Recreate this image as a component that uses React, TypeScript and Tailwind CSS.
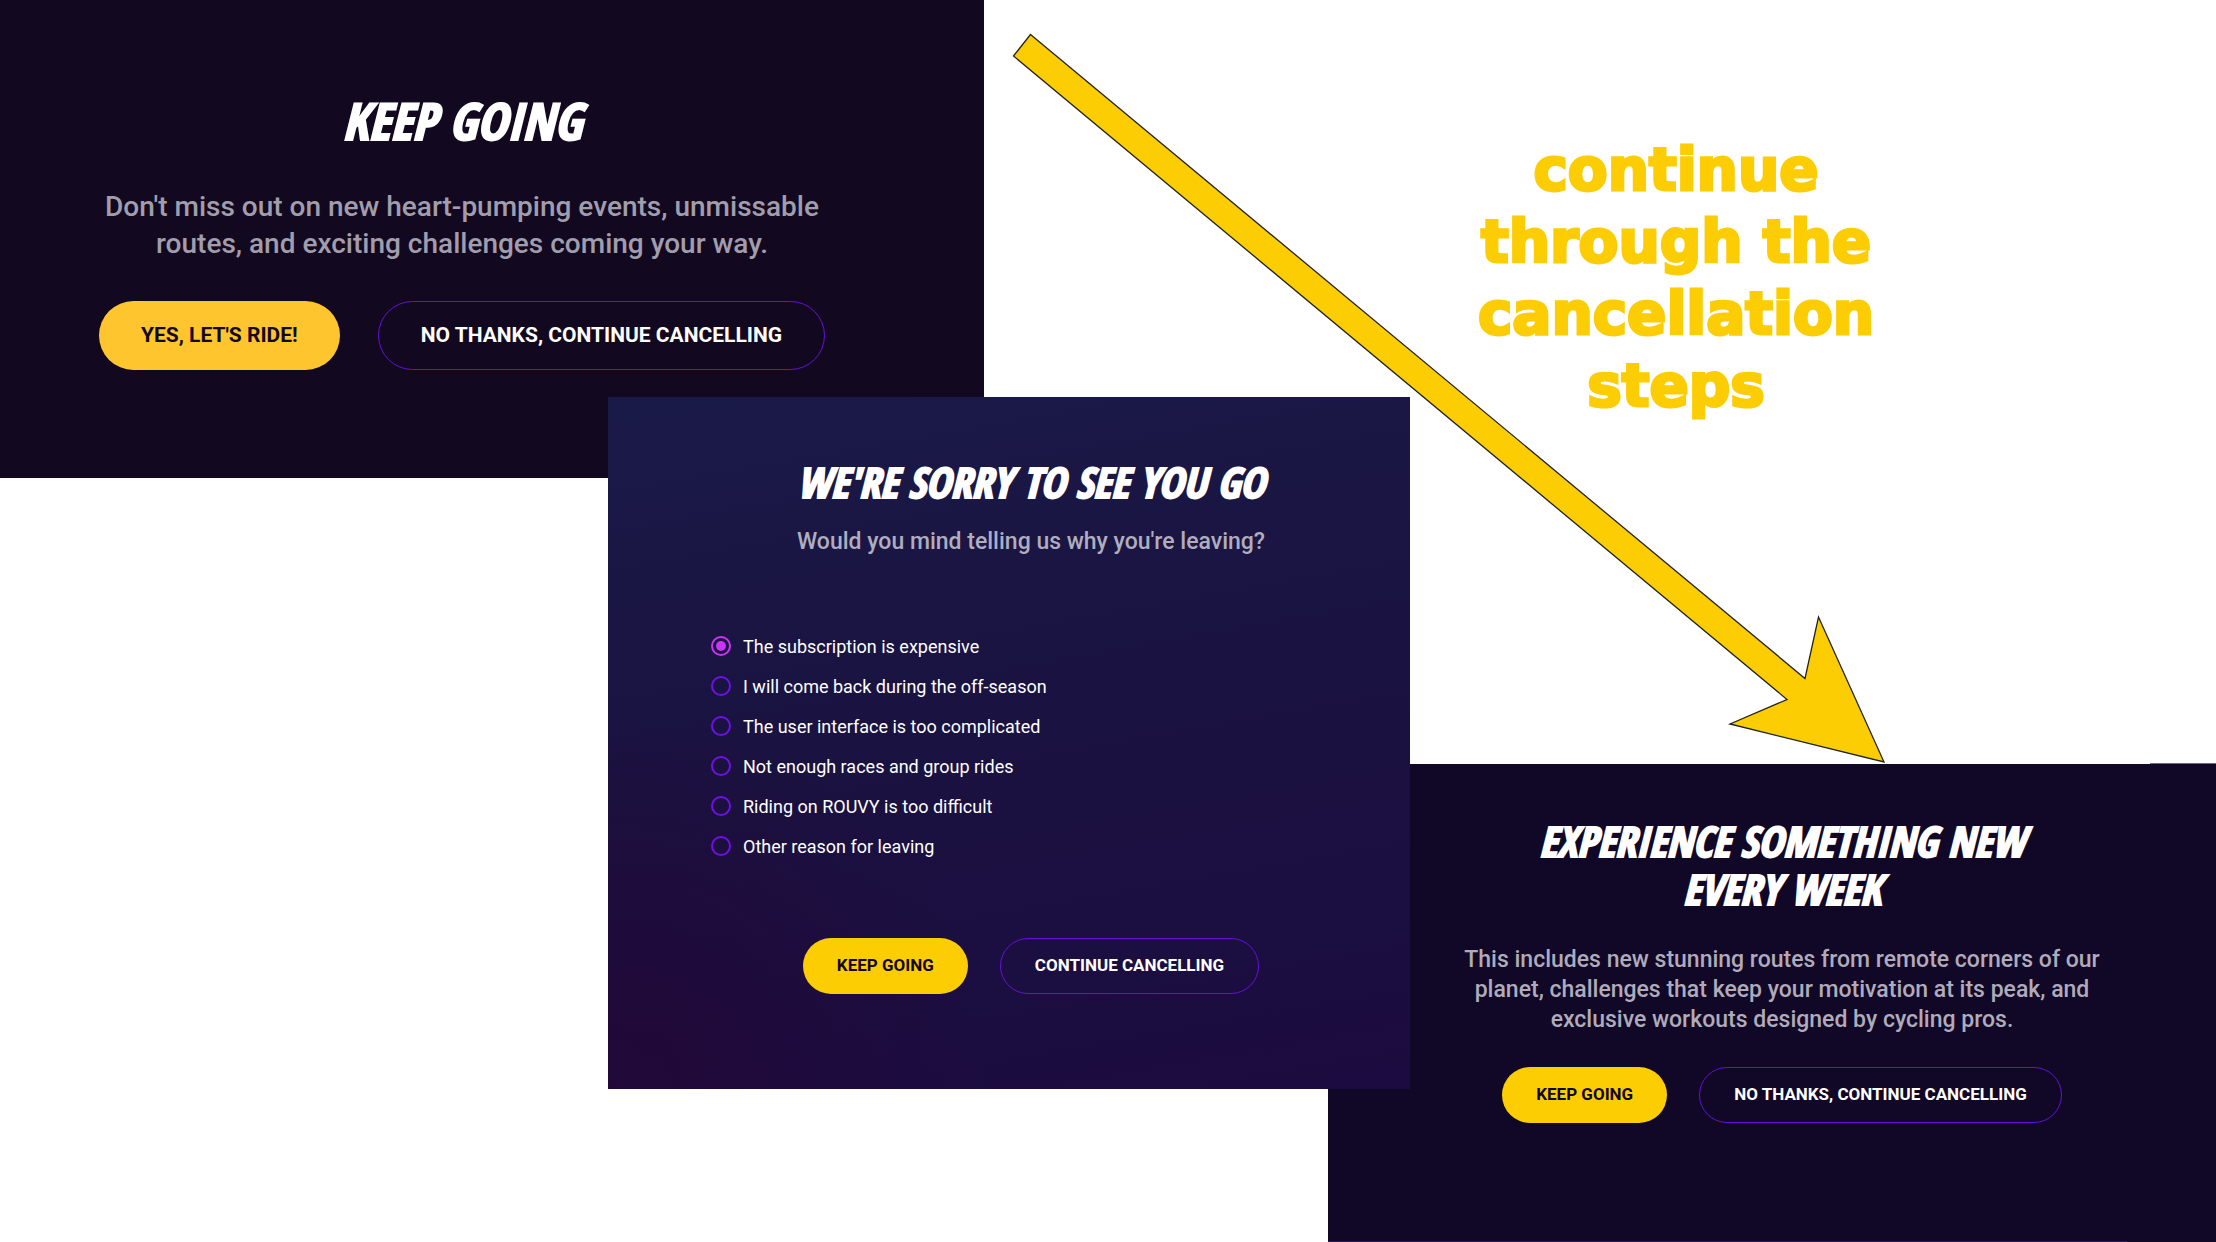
import { useState } from "react";
import type { ReactNode } from "react";

const REASONS = [
  "The subscription is expensive",
  "I will come back during the off-season",
  "The user interface is too complicated",
  "Not enough races and group rides",
  "Riding on ROUVY is too difficult",
  "Other reason for leaving",
];

const headingFont =
  "font-['Open_Sans_Condensed','Roboto_Condensed',sans-serif] font-bold italic uppercase text-white [-webkit-text-stroke:2px_#ffffff]";

function PillButton({ tone, large = false, children }: { tone: "yellow" | "amber" | "outline"; large?: boolean; children: ReactNode }) {
  const size = large ? "h-[69px] px-[42px] text-[21px]" : "h-14 px-[34px] text-[17px]";
  const tones = {
    yellow: "bg-[#fccd03] text-[#120722]",
    amber: "bg-[#ffc52f] text-[#120920]",
    outline: "border border-[#6510dc] text-white",
  };
  return (
    <button type="button" className={`shrink-0 whitespace-nowrap rounded-full font-bold uppercase ${size} ${tones[tone]}`}>
      {children}
    </button>
  );
}

function KeepGoingPanel() {
  return (
    <section className="col-start-1 col-end-3 row-start-1 row-end-3 flex flex-col items-center bg-[#120920] pt-[88px] pr-[60px]">
      <h2 className={`text-[51px] leading-16 ${headingFont}`}>Keep going</h2>
      <p className="mt-9 max-w-[740px] text-center text-[28px] leading-[37px] font-medium text-[#a19dac]">
        Don't miss out on new heart-pumping events, unmissable routes, and exciting challenges coming your way.
      </p>
      <div className="mt-[39px] flex gap-[38px]">
        <PillButton tone="amber" large>Yes, let's ride!</PillButton>
        <PillButton tone="outline" large>No thanks, continue cancelling</PillButton>
      </div>
    </section>
  );
}

function SurveyPanel() {
  const [reason, setReason] = useState(REASONS[0]);
  return (
    <form className="z-10 col-start-2 col-end-5 row-start-2 row-end-5 flex flex-col items-center bg-[#1a1040] bg-[radial-gradient(circle_at_0%_100%,#210838_0%,transparent_36%),linear-gradient(170deg,#1a1a48_0%,#1a1240_50%,#1c0b40_100%)] pt-[61px] pl-11">
      <h2 className={`text-[42px] leading-12 ${headingFont}`}>We're sorry to see you go</h2>
      <p className="mt-[21px] text-[23px] leading-[30px] font-medium text-[#b0adbe]">Would you mind telling us why you're leaving?</p>
      <fieldset aria-label="Reason for leaving" className="mt-[69px] w-full pl-[59px]">
        {REASONS.map((text) => (
          <label key={text} className="flex h-10 items-center gap-3 text-[18px] text-white">
            <input
              type="radio"
              name="reason"
              checked={reason === text}
              onChange={() => setReason(text)}
              className="grid size-5 appearance-none place-items-center rounded-full border-2 border-[#7010e6] before:size-[10px] before:rounded-full checked:border-[#cb33f7] checked:before:bg-[#cb33f7]"
            />
            {text}
          </label>
        ))}
      </fieldset>
      <div className="mt-[72px] flex gap-8">
        <PillButton tone="yellow">Keep going</PillButton>
        <PillButton tone="outline">Continue cancelling</PillButton>
      </div>
    </form>
  );
}

function ExperiencePanel() {
  return (
    <section className="relative col-start-4 col-end-6 row-start-4 row-end-6 flex flex-col items-center bg-[#110726] pt-[53px] pl-5">
      <span className="absolute -top-px right-0 h-px w-[66px] bg-[#110726]/60" />
      <span className="absolute right-[89px] bottom-0 left-0 h-px bg-[#2a1260]" />
      <h2 className={`max-w-[560px] text-center text-[42px] leading-12 ${headingFont}`}>Experience something new every week</h2>
      <p className="mt-8 max-w-[660px] text-center text-[23px] leading-[30px] font-medium text-[#b0abbb]">
        This includes new stunning routes from remote corners of our planet, challenges that keep your motivation at its peak, and exclusive workouts designed by cycling pros.
      </p>
      <div className="mt-8 flex gap-8">
        <PillButton tone="yellow">Keep going</PillButton>
        <PillButton tone="outline">No thanks, continue cancelling</PillButton>
      </div>
    </section>
  );
}

export default function App() {
  return (
    <main className="relative grid min-h-screen grid-cols-[608fr_376fr_344fr_82fr_806fr] grid-rows-[397fr_81fr_286fr_325fr_153fr] bg-white font-['Roboto',sans-serif]">
      <KeepGoingPanel />
      <div className="col-start-4 col-end-6 row-start-1 row-end-4 pt-[134px] pr-48">
        <p className="mx-auto max-w-[420px] text-center font-['DejaVu_Sans',sans-serif] text-[58px] leading-[72px] font-bold text-[#fccd03] [-webkit-text-stroke:3px_#fccd03]">
          continue through the cancellation steps
        </p>
      </div>
      <SurveyPanel />
      <ExperiencePanel />
      <svg viewBox="0 0 2216 1242" preserveAspectRatio="none" aria-hidden="true" className="pointer-events-none absolute inset-0 z-20 h-full w-full">
        <path
          d="M1030.5 34.5 1805 678.5 1818.5 617 1884 762 1730 724 1787 699.5 1013.5 56Z"
          fill="#fccd03"
          stroke="#222222"
          strokeWidth="1.3"
        />
      </svg>
    </main>
  );
}
